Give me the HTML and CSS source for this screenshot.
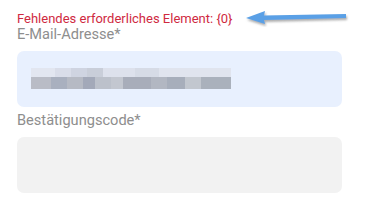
FILE: index.html
```html
<!DOCTYPE html>
<html lang="de">
    <head>
        <meta charset="UTF-8">
        <title>Anmeldung</title>
        <link rel="stylesheet" href="styles.css">
    </head>
    <body>
        <div class="form">
            <div class="error">Fehlendes erforderliches Element: {0}</div>
            <label class="label">E-Mail-Adresse*</label>
            <div class="field field_filled">
                <div class="blur">
                    <div class="blur_top"></div>
                    <div class="blur_bottom"></div>
                </div>
            </div>
            <label class="label">Bestätigungscode*</label>
            <div class="field"></div>
        </div>

        <svg class="arrow" width="110" height="22" viewBox="0 0 110 22">
            <defs>
                <filter id="shadow" x="-10%" y="-50%" width="120%" height="200%">
                    <feDropShadow dx="1" dy="2" stdDeviation="1.2" flood-color="#777" flood-opacity="0.6"/>
                </filter>
            </defs>
            <path d="M1 13 L20 6 L19 10.5 L101 9 L101 13 L19 15 L20 19 Z" fill="#5aa0e6" filter="url(#shadow)"/>
        </svg>
    </body>
</html>
```

FILE: styles.css
```css
body{
    margin: 0;
    background-color: #ffffff;
    font-family: Roboto, "Liberation Sans", sans-serif;
    position: relative;
}

.form{
    display: flex;
    flex-direction: column;
    padding: 11px 25px 0 17px;
}

.error{
    color: #cf2a3f;
    font-size: 13px;
    line-height: 15px;
}

.label{
    color: #8e8e8e;
    font-size: 14.6px;
    line-height: 17px;
}

.field{
    height: 56px;
    border-radius: 7px;
    background-color: #f2f2f2;
    margin: 8px 0 5px 0;
}

.field_filled{
    background-color: #e8f0fe;
    display: flex;
    align-items: center;
}

.blur{
    width: 200px;
    margin-left: 14px;
    margin-top: -2px;
}

.blur_top{
    height: 9px;
    background: linear-gradient(to right,
        #e2e6f0 0, #e2e6f0 12%, #d9dde9 12%, #d9dde9 20%, #cfd4e1 20%, #cfd4e1 28%,
        #c9ced9 28%, #c9ced9 36%, #dde1ec 36%, #dde1ec 52%, #d6dbe6 52%, #d6dbe6 64%,
        #e0e4ee 64%, #e0e4ee 100%);
}

.blur_bottom{
    height: 12px;
    background: linear-gradient(to right,
        #b9bcc6 0, #b9bcc6 10%, #a9b0bf 10%, #a9b0bf 18%, #b6bac4 18%, #b6bac4 26%,
        #a3a9b9 26%, #a3a9b9 32%, #bcc1cb 32%, #bcc1cb 40%, #c3c7d0 40%, #c3c7d0 46%,
        #a8adba 46%, #a8adba 60%, #b2b7c2 60%, #b2b7c2 68%, #a7aebb 68%, #a7aebb 77%,
        #c2c7cf 77%, #c2c7cf 85%, #aab1bc 85%, #aab1bc 100%);
}

.arrow{
    position: absolute;
    left: 245px;
    top: 5px;
}
```
